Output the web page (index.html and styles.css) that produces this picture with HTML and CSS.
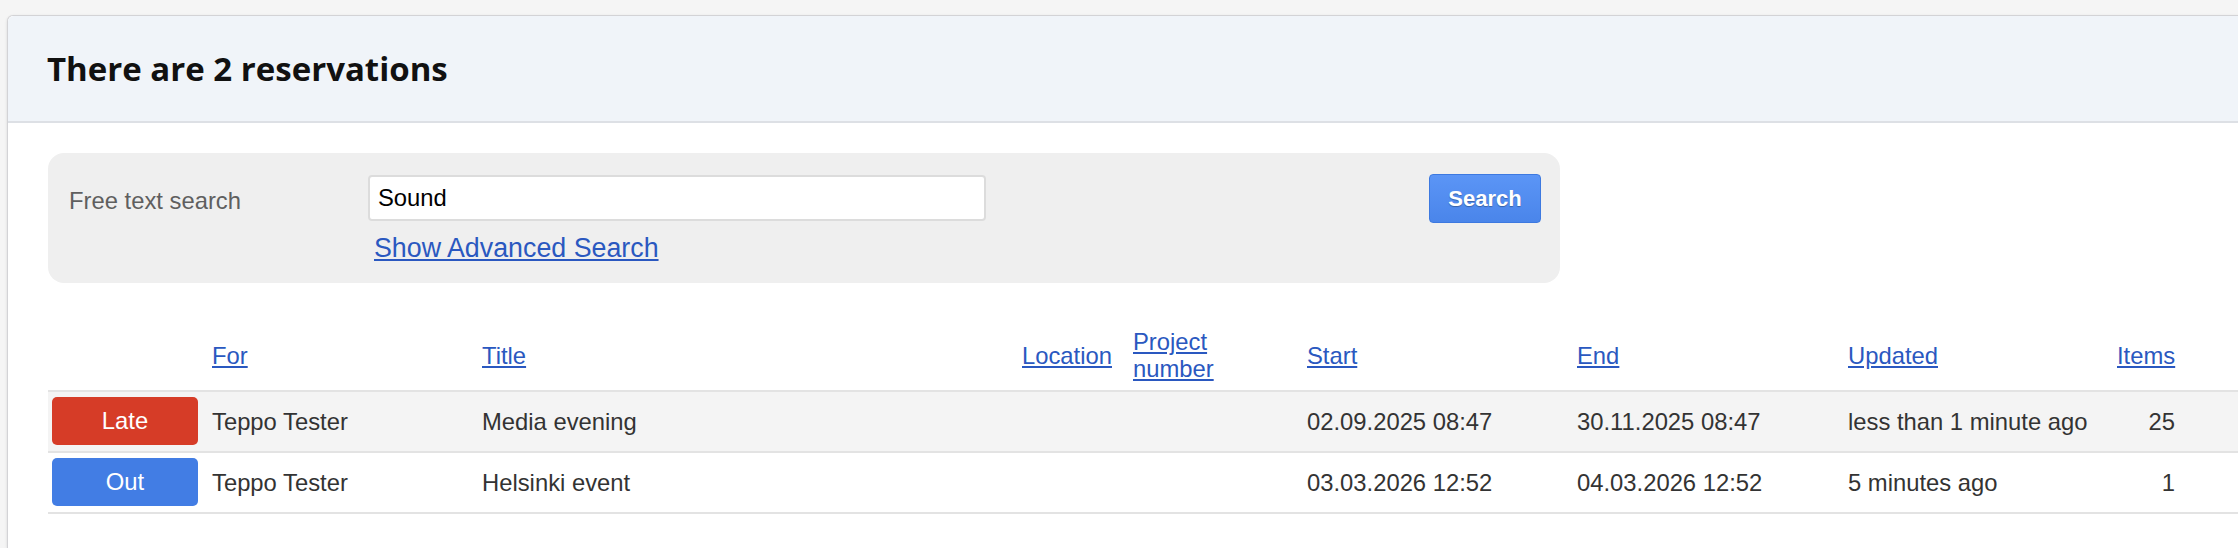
FILE: index.html
```html
<!DOCTYPE html>
<html lang="en">
<head>
    <meta charset="UTF-8">
    <meta name="viewport" content="width=device-width, initial-scale=1.0">
    <title>Reservations</title>
    <link rel="stylesheet" href="styles.css">
</head>
<body>
    <div class="card">
        <!-- Header -->
        <div class="card-header">
            <h1>There are 2 reservations</h1>
        </div>

        <div class="card-body">
            <!-- Search -->
            <form class="search-panel">
                <label class="search-label" for="q">Free text search</label>
                <div class="search-field">
                    <input type="text" id="q" class="search-input" value="Sound">
                    <a href="#" class="advanced-link">Show Advanced Search</a>
                </div>
                <button type="button" class="search-btn">Search</button>
            </form>

            <!-- Reservations table -->
            <table class="reservations">
                <colgroup>
                    <col class="col-status">
                    <col class="col-for">
                    <col class="col-title">
                    <col class="col-location">
                    <col class="col-project">
                    <col class="col-start">
                    <col class="col-end">
                    <col class="col-updated">
                    <col class="col-items">
                    <col>
                </colgroup>
                <thead>
                    <tr>
                        <th></th>
                        <th><a href="#">For</a></th>
                        <th><a href="#">Title</a></th>
                        <th><a href="#">Location</a></th>
                        <th class="project"><a href="#">Project number</a></th>
                        <th><a href="#">Start</a></th>
                        <th><a href="#">End</a></th>
                        <th><a href="#">Updated</a></th>
                        <th class="num"><a href="#">Items</a></th>
                        <th></th>
                    </tr>
                </thead>
                <tbody>
                    <tr class="odd">
                        <td class="status"><span class="badge late">Late</span></td>
                        <td>Teppo Tester</td>
                        <td>Media evening</td>
                        <td></td>
                        <td></td>
                        <td>02.09.2025 08:47</td>
                        <td>30.11.2025 08:47</td>
                        <td>less than 1 minute ago</td>
                        <td class="num">25</td>
                        <td></td>
                    </tr>
                    <tr>
                        <td class="status"><span class="badge out">Out</span></td>
                        <td>Teppo Tester</td>
                        <td>Helsinki event</td>
                        <td></td>
                        <td></td>
                        <td>03.03.2026 12:52</td>
                        <td>04.03.2026 12:52</td>
                        <td>5 minutes ago</td>
                        <td class="num">1</td>
                        <td></td>
                    </tr>
                </tbody>
            </table>
        </div>
    </div>
</body>
</html>
```

FILE: styles.css
```css
body {
    font-family: "Liberation Sans", Arial, sans-serif;
    font-size: 23.8px;
    line-height: 27px;
    color: #333;
    margin: 0;
    padding: 15px 0 0 7px;
    background-color: #f5f5f5;
    overflow: hidden;
}

/* Card */
.card {
    width: 2300px;
    height: 532px;
    background-color: #fff;
    border: 1px solid #d3d3d6;
    border-bottom: none;
    border-radius: 6px 6px 0 0;
    box-shadow: 0 1px 3px rgba(0, 0, 0, 0.12);
}

.card-header {
    background-color: #f0f4f9;
    border-bottom: 2px solid #dde0e5;
    border-radius: 6px 6px 0 0;
    padding: 34px 39px 33px 39px;
}

.card-header h1 {
    margin: 0;
    font-family: "Open Sans", Lato, sans-serif;
    font-weight: 700;
    font-size: 33px;
    line-height: 38px;
    color: #111;
}

.card-body {
    padding: 30px 40px 0;
}

/* Search panel */
.search-panel {
    display: flex;
    align-items: flex-start;
    width: 1512px;
    box-sizing: border-box;
    background-color: #efefef;
    border-radius: 16px;
    padding: 22px 19px 20px 21px;
    margin: 0;
}

.search-label {
    width: 299px;
    padding-top: 12px;
    color: #5f5f5f;
}

.search-field {
    display: flex;
    flex-direction: column;
}

.search-input {
    width: 618px;
    height: 46px;
    box-sizing: border-box;
    border: 2px solid #dcdcdc;
    border-radius: 4px;
    padding: 0 8px;
    font-family: inherit;
    font-size: 23.8px;
    color: #000;
    background-color: #fff;
}

.advanced-link {
    margin-top: 12px;
    padding-left: 6px;
    font-size: 26.8px;
    line-height: 30px;
    color: #2a58c0;
}

.search-btn {
    margin-left: auto;
    margin-top: -1px;
    width: 112px;
    height: 49px;
    background: linear-gradient(to bottom, #5b95f6, #4a85ea);
    border: 1px solid #3d79e0;
    border-radius: 4px;
    color: #fff;
    font-family: inherit;
    font-weight: 700;
    font-size: 22px;
    text-shadow: 0 1px 1px rgba(0, 0, 0, 0.3);
    cursor: pointer;
}

/* Table */
.reservations {
    width: 100%;
    table-layout: fixed;
    border-collapse: collapse;
    margin-top: 37px;
}

.col-status { width: 156px; }
.col-for { width: 270px; }
.col-title { width: 540px; }
.col-location { width: 111px; }
.col-project { width: 174px; }
.col-start { width: 270px; }
.col-end { width: 271px; }
.col-updated { width: 269px; }
.col-items { width: 74px; }

.reservations th {
    font-weight: normal;
    text-align: left;
    vertical-align: middle;
    padding: 8px;
    height: 54px;
    border-bottom: 2px solid #e3e3e3;
}

.reservations th.project {
    padding-right: 60px;
}

.reservations a {
    color: #2a58c0;
}

.reservations td {
    padding: 5px 8px 6px;
    white-space: nowrap;
    border-bottom: 2px solid #e3e3e3;
}

.reservations tr.odd td {
    background-color: #f4f4f4;
}

.reservations .num {
    text-align: right;
}

.reservations td.status {
    padding: 5px 6px 6px 4px;
}

/* Status badges */
.badge {
    display: block;
    height: 48px;
    line-height: 48px;
    border-radius: 5px;
    text-align: center;
    color: #fff;
}

.badge.late {
    background-color: #d63c27;
}

.badge.out {
    background-color: #427de4;
}
```
